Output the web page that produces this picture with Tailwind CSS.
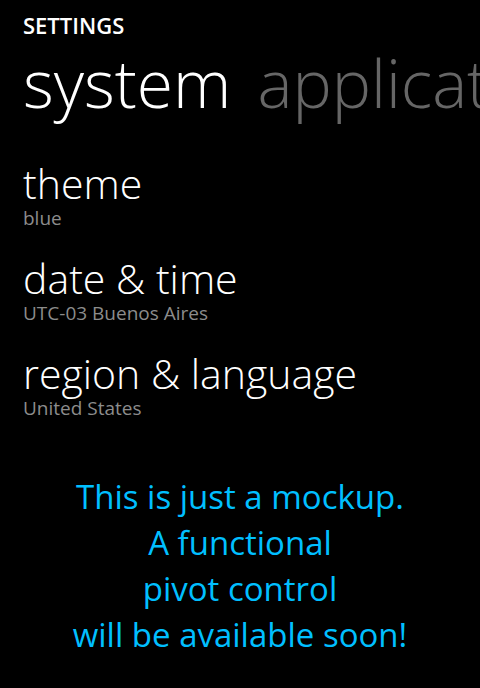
<!DOCTYPE html>
<html lang="en">
<head>
<meta charset="utf-8">
<meta name="viewport" content="width=device-width, initial-scale=1">
<title>Settings</title>
<script src="https://cdn.jsdelivr.net/npm/@tailwindcss/browser@4"></script>
</head>
<body class="min-h-screen bg-black font-['Open_Sans','Noto_Sans',sans-serif] text-white">
<header class="overflow-hidden pl-[23px] pt-[11px]">
<h1 class="text-[22px] leading-7 font-semibold">SETTINGS</h1>
<nav class="flex gap-[26px] font-light text-[66px] leading-[86px] whitespace-nowrap" aria-label="Settings sections">
<a href="#system" aria-current="page">system</a>
<a href="#applications" class="text-[#666]">applications</a>
</nav>
</header>
<main id="system">
<ul class="flex flex-col gap-6 pl-[23px] pt-[35px]">
<li><a href="#theme" class="block"><span class="block text-[41px] leading-[46px] font-light">theme</span><span class="block text-[19px] leading-[25px] text-[#8c8c8c]">blue</span></a></li>
<li><a href="#date" class="block"><span class="block text-[41px] leading-[46px] font-light">date &amp; time</span><span class="block text-[19px] leading-[25px] text-[#8c8c8c]">UTC-03 Buenos Aires</span></a></li>
<li><a href="#region" class="block"><span class="block text-[41px] leading-[46px] font-light">region &amp; language</span><span class="block text-[19px] leading-[25px] text-[#8c8c8c]">United States</span></a></li>
</ul>
<p class="pt-[53px] text-center text-[33px] leading-[46px] text-[#00bfff]">This is just a mockup.<br>A functional<br>pivot control<br>will be available soon!</p>
</main>
</body>
</html>
